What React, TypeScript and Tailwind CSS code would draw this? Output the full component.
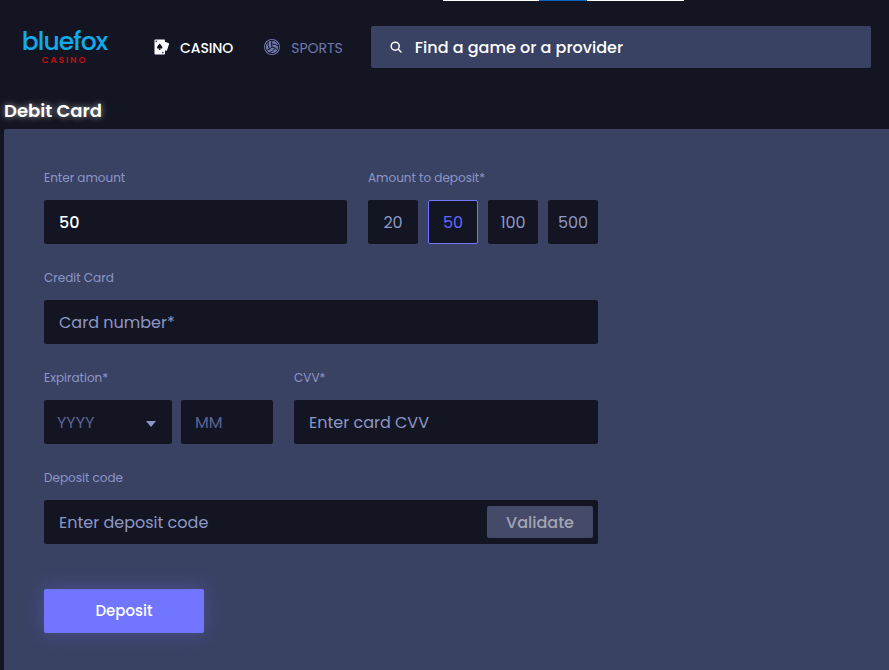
import { Volleyball } from "lucide-react";

const font = "font-['Poppins','Inter','Liberation_Sans',sans-serif]";

function Label({ children }: { children: React.ReactNode }) {
  return <div className="mb-[16px] h-[12px] text-[12px] leading-[12px] text-[#8d96c6]">{children}</div>;
}

function Box({ children, className = "" }: { children?: React.ReactNode; className?: string }) {
  return (
    <div className={`flex h-[44px] items-center rounded-[2px] bg-[#131622] text-[16px] ${className}`}>
      {children}
    </div>
  );
}

function Amount({ value, active }: { value: string; active?: boolean }) {
  return (
    <div
      className={`flex h-[44px] w-[50px] items-center justify-center rounded-[2px] bg-[#131622] pt-[2px] text-[16px] ${
        active ? "border border-[#7175ff] text-[#6367ff]" : "text-[#8d96c6]"
      }`}
    >
      {value}
    </div>
  );
}

function CasinoIcon() {
  return (
    <svg width="16" height="16" viewBox="0 0 16 16">
      <path d="M10 2.5l4.5 1.6c.5.2.7.6.5 1.1l-2 6c-.2.5-.6.7-1 .5L10 11z" fill="#fff" />
      <rect x="0.5" y="0.5" width="10.500" height="15" rx="0.8" fill="#fff" />
      <path d="M5.700 4.600c1 1.600 2.700 2.500 2.700 4 0 1.200-1.500 1.600-2.300.7l.5 1.700H4.800l.5-1.700c-.8.9-2.300.5-2.300-.7 0-1.500 1.700-2.400 2.700-4z" fill="#131622" />
      <rect x="1.500" y="1.500" width="1.600" height="1.600" fill="#3b4f8a" />
      <rect x="8" y="12.800" width="1.600" height="1.600" fill="#3b4f8a" />
    </svg>
  );
}

function SearchIcon() {
  return (
    <svg width="12" height="12" viewBox="0 0 12 12" fill="none" stroke="#fff" strokeWidth="1.500" strokeLinecap="round">
      <circle cx="5.200" cy="5.200" r="4" />
      <path d="M8.300 8.300L11 11" />
    </svg>
  );
}

export default function App() {
  return (
    <div className={`flex h-[670px] w-[889px] flex-col overflow-hidden bg-[#131622] ${font}`}>
      <div className="ml-[443px] flex h-px w-[241px] bg-white">
        <div className="ml-[96px] h-px w-[48px] bg-[#0a66c2]" />
      </div>

      <header className="mt-[25px] flex h-[42px] items-center pr-[18px]">
        <div className="ml-[21px] flex w-[87px] flex-col items-center">
          <span className="text-[25px] font-medium leading-[26px] tracking-[-0.9px] text-[#11abec]">
            bluefox
          </span>
          <span className="mt-[1px] text-[9px] font-semibold leading-[9px] tracking-[1.8px] text-[#c00d12]">
            CASINO
          </span>
        </div>
        <nav className="ml-[46px] flex items-center">
          <CasinoIcon />
          <span className="ml-[10px] pt-[2px] text-[14px] font-medium tracking-[-0.1px] text-white">CASINO</span>
          <span className="ml-[31px] flex h-[16px] w-[16px] items-center justify-center rounded-full bg-[#7079b0]">
            <Volleyball size={16} strokeWidth={1.500} className="text-[#131622]" />
          </span>
          <span className="ml-[11px] pt-[2px] text-[14px] text-[#6f78ad]">SPORTS</span>
        </nav>
        <div className="ml-[28px] flex h-[42px] flex-1 items-center rounded-[2px] bg-[#3a4264] pl-[19px] text-[16px] font-medium text-white">
          <SearchIcon />
          <span className="ml-[13px] pt-[2px]">Find a game or a provider</span>
        </div>
      </header>

      <h1 className="ml-[4px] mt-[29px] text-[18px] font-semibold leading-[27px] text-white [text-shadow:0_0_6px_rgba(255,255,255,0.6)]">
        Debit Card
      </h1>

      <main className="ml-[4px] mt-[5px] flex-1 rounded-tl-[2px] bg-[#3a4264] pl-[40px] pt-[43px]">
        <div className="w-[554px]">
          <div className="flex gap-[21px]">
            <div className="w-[303px]">
              <Label>Enter amount</Label>
              <Box className="px-[15px] pt-[2px] font-medium text-white">50</Box>
            </div>
            <div>
              <Label>Amount to deposit*</Label>
              <div className="flex gap-[10px]">
                <Amount value="20" />
                <Amount value="50" active />
                <Amount value="100" />
                <Amount value="500" />
              </div>
            </div>
          </div>

          <div className="mt-[28px]">
            <Label>Credit Card</Label>
            <Box className="px-[15px] pt-[2px] text-[#8d96c6]">Card number*</Box>
          </div>

          <div className="mt-[28px] flex">
            <div>
              <Label>Expiration*</Label>
              <div className="flex gap-[9px]">
                <Box className="w-[128px] justify-between pl-[13px] pr-[16px] pt-[2px] text-[#5a6496]">
                  YYYY
                  <span className="mt-[1px] h-0 w-0 border-x-[5.5px] border-t-[6px] border-x-transparent border-t-[#8d96c6]" />
                </Box>
                <Box className="w-[92px] px-[14px] pt-[2px] text-[#5a6496]">MM</Box>
              </div>
            </div>
            <div className="ml-[21px] flex-1">
              <Label>CVV*</Label>
              <Box className="px-[15px] pt-[2px] text-[#8d96c6]">Enter card CVV</Box>
            </div>
          </div>

          <div className="mt-[28px]">
            <Label>Deposit code</Label>
            <Box className="justify-between pl-[15px] pr-[5px] text-[#8d96c6]">
              <span className="pt-[2px]">Enter deposit code</span>
              <span className="flex h-[32px] w-[106px] items-center justify-center rounded-[2px] bg-[#444a68] pt-[2px] font-medium text-[#a3a5b5]">
                Validate
              </span>
            </Box>
          </div>

          <button className="mt-[45px] h-[44px] w-[160px] rounded-[2px] bg-[#7175ff] text-[15px] font-medium text-white shadow-[0_0_20px_rgba(113,117,255,0.3)]">
            Deposit
          </button>
        </div>
      </main>
    </div>
  );
}
